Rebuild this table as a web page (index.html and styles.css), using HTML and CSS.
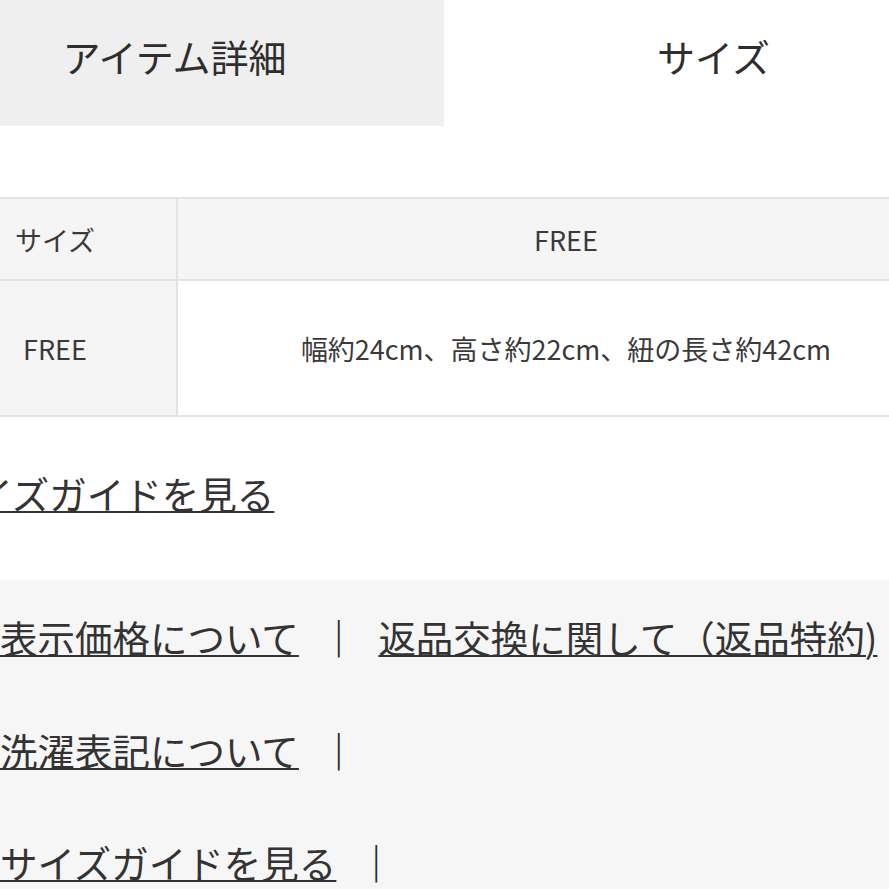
FILE: index.html
```html
<!DOCTYPE html>
<html lang="ja">
<head>
    <meta charset="UTF-8">
    <title>サイズ</title>
    <link rel="stylesheet" href="styles.css">
</head>
<body>
    <div class="page">
        <!-- Tabs -->
        <div class="tabs">
            <div class="tab tab-off">アイテム詳細</div>
            <div class="tab tab-on">サイズ</div>
        </div>

        <!-- Size table -->
        <table class="size-table">
            <tr class="row-head">
                <th class="col-label">サイズ</th>
                <td class="col-value">FREE</td>
            </tr>
            <tr class="row-body">
                <th class="col-label">FREE</th>
                <td class="col-value">幅約24cm、高さ約22cm、紐の長さ約42cm</td>
            </tr>
        </table>

        <div class="guide">
            <a href="#" class="link">サイズガイドを見る</a>
        </div>
    </div>

    <!-- Footer links -->
    <div class="footer">
        <div class="footer-row">
            <a href="#" class="link">表示価格について</a><span class="sep">｜</span><a href="#" class="link">返品交換に関して（返品特約)</a><span class="sep">｜</span>
        </div>
        <div class="footer-row">
            <a href="#" class="link">洗濯表記について</a><span class="sep">｜</span>
        </div>
        <div class="footer-row">
            <a href="#" class="link">サイズガイドを見る</a><span class="sep">｜</span>
        </div>
    </div>
</body>
</html>
```

FILE: styles.css
```css
html, body {
    margin: 0;
    padding: 0;
    background: #fff;
    overflow: hidden;
}
body {
    font-family: "Noto Sans CJK JP", "Noto Sans", sans-serif;
    color: #333;
    width: 889px;
    height: 889px;
}
.page {
    width: 1078px;
    margin-left: -95px;
}
.tabs {
    display: flex;
    height: 126px;
}
.tab {
    flex: 1;
    display: flex;
    justify-content: center;
    align-items: center;
    padding-bottom: 16px;
    box-sizing: border-box;
    font-size: 38px;
    color: #2e2e2e;
}
.tab-off {
    background: #efefef;
}
.tab-on {
    background: #fff;
}
.size-table {
    width: 1024px;
    margin: 71px 27px 0;
    border-collapse: collapse;
    font-size: 27px;
    color: #3a3a3a;
}
.size-table th,
.size-table td {
    border: 2px solid #e3e3e3;
    font-weight: normal;
    text-align: center;
    padding: 0;
}
.col-label {
    width: 242px;
    background: #f5f5f5;
}
.row-head td {
    background: #f5f5f5;
}
.row-body td {
    background: #fff;
}
.row-head {
    height: 82px;
}
.row-body {
    height: 136px;
}
.guide {
    padding: 48px 0 0 33px;
    height: 163px;
    box-sizing: border-box;
    font-size: 37.5px;
}
.link {
    color: #333;
    text-decoration: underline;
    text-underline-offset: 2px;
    text-decoration-thickness: 2px;
}
.footer {
    background: #f6f6f6;
    padding-top: 1px;
    font-size: 37.5px;
    white-space: nowrap;
}
.footer-row {
    height: 112.5px;
    line-height: 112.5px;
}
.sep {
    margin: 0 21px;
    font-weight: bold;
    color: #2a2a2a;
}
```
